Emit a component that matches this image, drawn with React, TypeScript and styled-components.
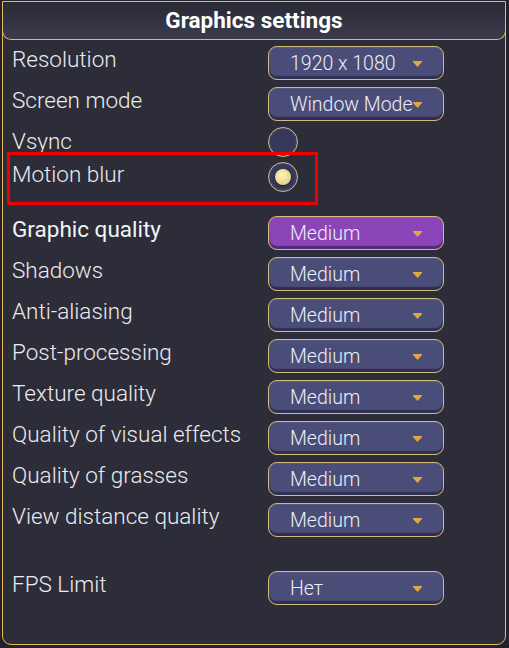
import React from "react";
import styled, { createGlobalStyle, css } from "styled-components";

const GlobalStyle = createGlobalStyle`
	html, body {
		margin: 0;
		padding: 0;
		background: #22222b;
	}
	body {
		font-family: Roboto, "Liberation Sans", sans-serif;
	}
`;

const Panel = styled.div`
	box-sizing: border-box;
	width: 504px;
	height: 644px;
	margin: 1px 0 0 2px;
	background: #2d2d39;
	border: 1px solid #e9b75c;
	border-radius: 0 0 9px 9px;
	display: flex;
	flex-direction: column;
`;

const Header = styled.div`
	box-sizing: border-box;
	height: 38px;
	margin: 0 -1px;
	border: 1px solid #e9b75c;
	border-top: none;
	border-radius: 0 0 9px 9px;
	background: linear-gradient(to bottom, #2a2a35, #3b3b4d);
	display: flex;
	align-items: center;
	justify-content: center;
	color: #ffffff;
	font-size: 22.5px;
	font-weight: 700;
	padding-bottom: 1px;
`;

const Body = styled.div`
	display: flex;
	flex-direction: column;
	padding: 0 0 0 9px;
`;

const Row = styled.div<{ $top: number; $tall?: boolean }>`
	position: relative;
	display: grid;
	grid-template-columns: 256px 176px;
	align-items: start;
	margin-top: ${p => p.$top}px;
	height: ${p => (p.$tall ? 34 : 30)}px;
`;

const Label = styled.div<{ $strong?: boolean; $shift?: number }>`
	color: ${p => (p.$strong ? "#f4f4f6" : "#ebebef")};
	font-size: 22.5px;
	font-weight: ${p => (p.$strong ? 400 : 300)};
	line-height: 26px;
	margin-top: ${p => p.$shift ?? 0}px;
	white-space: nowrap;
`;

const Select = styled.div<{ $accent?: boolean }>`
	position: relative;
	box-sizing: border-box;
	height: 34px;
	border: 1px solid #d3bd7c;
	border-radius: 9px;
	background: ${p => (p.$accent ? "#8a45b9" : "#4b4d79")};
	box-shadow: inset 0 -3px 1px rgba(10, 10, 30, 0.45), inset 0 1px 0 rgba(255, 255, 255, 0.06);
	color: #eeeef6;
	font-size: 19.5px;
	font-weight: 300;
	line-height: 30px;
	padding: 2px 0 0 21px;
	white-space: nowrap;
`;

const Arrow = styled.svg`
	position: absolute;
	right: 21px;
	top: 14px;
`;

const Radio = styled.div<{ $on?: boolean }>`
	position: relative;
	box-sizing: border-box;
	width: 30px;
	height: 30px;
	border-radius: 50%;
	border: 1px solid #d3bd7c;
	background: radial-gradient(circle at 50% 50%, #35375b 58%, #4a4c79 78%, #3d3f66 100%);
	display: flex;
	align-items: center;
	justify-content: center;
	${p =>
		p.$on &&
		css`
			&::after {
				content: "";
				width: 16px;
				height: 16px;
				border-radius: 50%;
				background: radial-gradient(circle at 45% 40%, #fff4bd 0%, #f3df93 45%, #d9c072 100%);
				box-shadow: 0 1px 2px rgba(0, 0, 0, 0.5);
			}
		`}
`;

const Marker = styled.div`
	position: absolute;
	left: -5px;
	top: -10px;
	width: 311px;
	height: 53px;
	box-sizing: border-box;
	border: 3px solid #f00000;
	pointer-events: none;
`;

const Caret = () => (
	<Arrow width="9" height="6" viewBox="0 0 9 6">
		<polygon points="0,0 9,0 9,1 4.5,6 0,1" fill="#e3a63d" />
	</Arrow>
);

const Choice = ({ value, accent }: { value: string; accent?: boolean }) => (
	<Select $accent={accent}>
		{value}
		<Caret />
	</Select>
);

const qualityRows = [
	"Shadows",
	"Anti-aliasing",
	"Post-processing",
	"Texture quality",
	"Quality of visual effects",
	"Quality of grasses",
	"View distance quality",
];

export default function App() {
	return (
		<>
			<GlobalStyle />
			<Panel>
				<Header>Graphics settings</Header>
				<Body>
					<Row $top={6} $tall>
						<Label>Resolution</Label>
						<Choice value="1920 x 1080" />
					</Row>
					<Row $top={7} $tall>
						<Label>Screen mode</Label>
						<Choice value="Window Mode" />
					</Row>
					<Row $top={6}>
						<Label $shift={1}>Vsync</Label>
						<div><Radio /></div>
					</Row>
					<Row $top={5}>
						<Label $shift={-1}>Motion blur</Label>
						<div><Radio $on /></div>
						<Marker />
					</Row>
					<Row $top={24} $tall>
						<Label $strong>Graphic quality</Label>
						<Choice value="Medium" accent />
					</Row>
					{qualityRows.map(name => (
						<Row key={name} $top={7} $tall>
							<Label>{name}</Label>
							<Choice value="Medium" />
						</Row>
					))}
					<Row $top={34} $tall>
						<Label>FPS Limit</Label>
						<Choice value="Нет" />
					</Row>
				</Body>
			</Panel>
		</>
	);
}
